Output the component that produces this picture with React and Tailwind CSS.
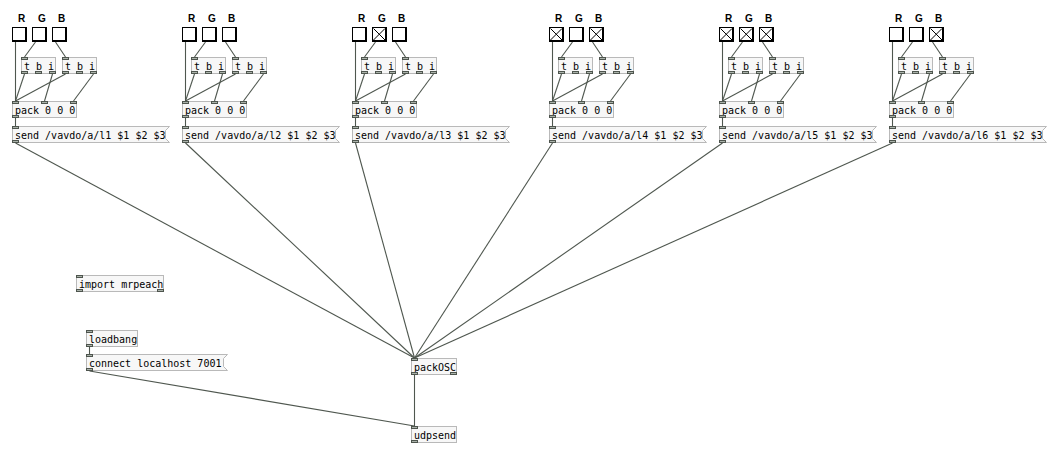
import React from "react";

const H = 17;
const CORD = "#4f574f";

function Port({ side, left, right }) {
  const pos = side === "top" ? "-top-px" : "-bottom-px";
  return (
    <div
      className={`absolute ${pos} w-[7px] h-[3px] border border-[#4e554e] bg-[#aab2aa]`}
      style={right !== undefined ? { right } : { left }}
    />
  );
}

function ports(n, w, side) {
  if (n <= 0) return null;
  if (n === 1) return [<Port key={side + 0} side={side} left={-1} />];
  const arr = [];
  for (let i = 0; i < n; i++) {
    if (i === n - 1) arr.push(<Port key={side + i} side={side} right={-1} />);
    else arr.push(<Port key={side + i} side={side} left={Math.round(((w - 7) * i) / (n - 1)) - 1} />);
  }
  return arr;
}

function Obj({ x, y, w, text, ins = 1, outs = 1 }) {
  return (
    <div
      className="absolute border border-[#b9b9b9] bg-[#f7f7f7] box-border"
      style={{ left: x, top: y, width: w, height: H }}
    >
      <span className="block pl-[2px] pt-px leading-[15px] text-[10px] text-black whitespace-pre font-['DejaVu_Sans_Mono',monospace]">
        {text}
      </span>
      {ports(ins, w, "top")}
      {ports(outs, w, "bottom")}
    </div>
  );
}

function Msg({ x, y, w, text }) {
  return (
    <div className="absolute" style={{ left: x, top: y, width: w + 4, height: H }}>
      <svg className="absolute inset-0" width={w + 4} height={H}>
        <polygon
          points={`0.5,0.5 ${w + 3.5},0.5 ${w - 0.5},4.5 ${w - 0.5},${H - 4.5} ${w + 3.5},${H - 0.5} 0.5,${H - 0.5}`}
          fill="#f7f7f7"
          stroke="#b9b9b9"
        />
      </svg>
      <span className="relative block pl-[3px] pt-[2px] leading-[15px] text-[10px] text-black whitespace-pre font-['DejaVu_Sans_Mono',monospace]">
        {text}
      </span>
      <div className="absolute top-0 left-0 w-[7px] h-[3px] border border-[#4e554e] bg-[#aab2aa]" />
      <div className="absolute bottom-0 left-0 w-[7px] h-[3px] border border-[#4e554e] bg-[#aab2aa]" />
    </div>
  );
}

function Toggle({ x, y, on }) {
  return (
    <div
      className="absolute box-border border border-r-2 border-b-2 border-black bg-white"
      style={{ left: x, top: y, width: 15, height: 15 }}
    >
      {on && (
        <svg className="absolute inset-0" width="12" height="12">
          <line x1="0.5" y1="0.5" x2="12" y2="12" stroke="black" strokeWidth="1" />
          <line x1="12" y1="0.5" x2="0.5" y2="12" stroke="black" strokeWidth="1" />
        </svg>
      )}
    </div>
  );
}

const groups = [
  { x: 12, n: 1, t: [0, 0, 0] },
  { x: 182, n: 2, t: [0, 0, 0] },
  { x: 352, n: 3, t: [0, 1, 0] },
  { x: 549, n: 4, t: [1, 0, 1] },
  { x: 719, n: 5, t: [1, 1, 1] },
  { x: 889, n: 6, t: [0, 0, 1] },
];

const OSC = { x: 411, y: 358 };
const UDP = { x: 411, y: 426 };

export default function App() {
  const lines = [];
  groups.forEach((g) => {
    const gx = g.x;
    lines.push([gx + 3, 42, gx + 3, 101]);
    lines.push([gx + 23, 42, gx + 12, 57]);
    lines.push([gx + 43, 42, gx + 53, 57]);
    lines.push([gx + 12, 74, gx + 3, 101]);
    lines.push([gx + 40, 74, gx + 32, 101]);
    lines.push([gx + 53, 74, gx + 3, 101]);
    lines.push([gx + 81, 74, gx + 61, 101]);
    lines.push([gx + 3, 118, gx + 3, 126]);
    lines.push([gx + 3, 143, OSC.x + 3, OSC.y]);
  });
  lines.push([89, 347, 89, 354]);
  lines.push([89, 371, UDP.x + 3, UDP.y]);
  lines.push([OSC.x + 3, OSC.y + H, UDP.x + 3, UDP.y]);

  return (
    <div className="relative w-[1059px] h-[459px] bg-white overflow-hidden">
      <svg className="absolute inset-0" width="1059" height="459">
        {lines.map((l, i) => (
          <line key={i} x1={l[0] + 0.5} y1={l[1]} x2={l[2] + 0.5} y2={l[3]} stroke={CORD} strokeWidth="1.1" />
        ))}
      </svg>

      {groups.map((g) => (
        <React.Fragment key={g.n}>
          {["R", "G", "B"].map((c, i) => (
            <span
              key={c}
              className="absolute top-[11px] text-[10px] font-bold text-black font-['Liberation_Sans',sans-serif]"
              style={{ left: g.x + 6 + i * 20 }}
            >
              {c}
            </span>
          ))}
          {g.t.map((on, i) => (
            <Toggle key={i} x={g.x + i * 20} y={27} on={!!on} />
          ))}
          <Obj x={g.x + 9} y={57} w={35} text="t b i" ins={1} outs={3} />
          <Obj x={g.x + 50} y={57} w={35} text="t b i" ins={1} outs={3} />
          <Obj x={g.x} y={101} w={65} text="pack 0 0 0" ins={3} outs={1} />
          <Msg x={g.x} y={126} w={154} text={`send /vavdo/a/l${g.n} $1 $2 $3`} />
        </React.Fragment>
      ))}

      <Obj x={76} y={275} w={88} text="import mrpeach" ins={1} outs={2} />
      <Obj x={86} y={330} w={52} text="loadbang" ins={1} outs={1} />
      <Msg x={86} y={354} w={138} text="connect localhost 7001" />
      <Obj x={OSC.x} y={OSC.y} w={46} text="packOSC" ins={1} outs={2} />
      <Obj x={UDP.x} y={UDP.y} w={46} text="udpsend" ins={1} outs={1} />
    </div>
  );
}
